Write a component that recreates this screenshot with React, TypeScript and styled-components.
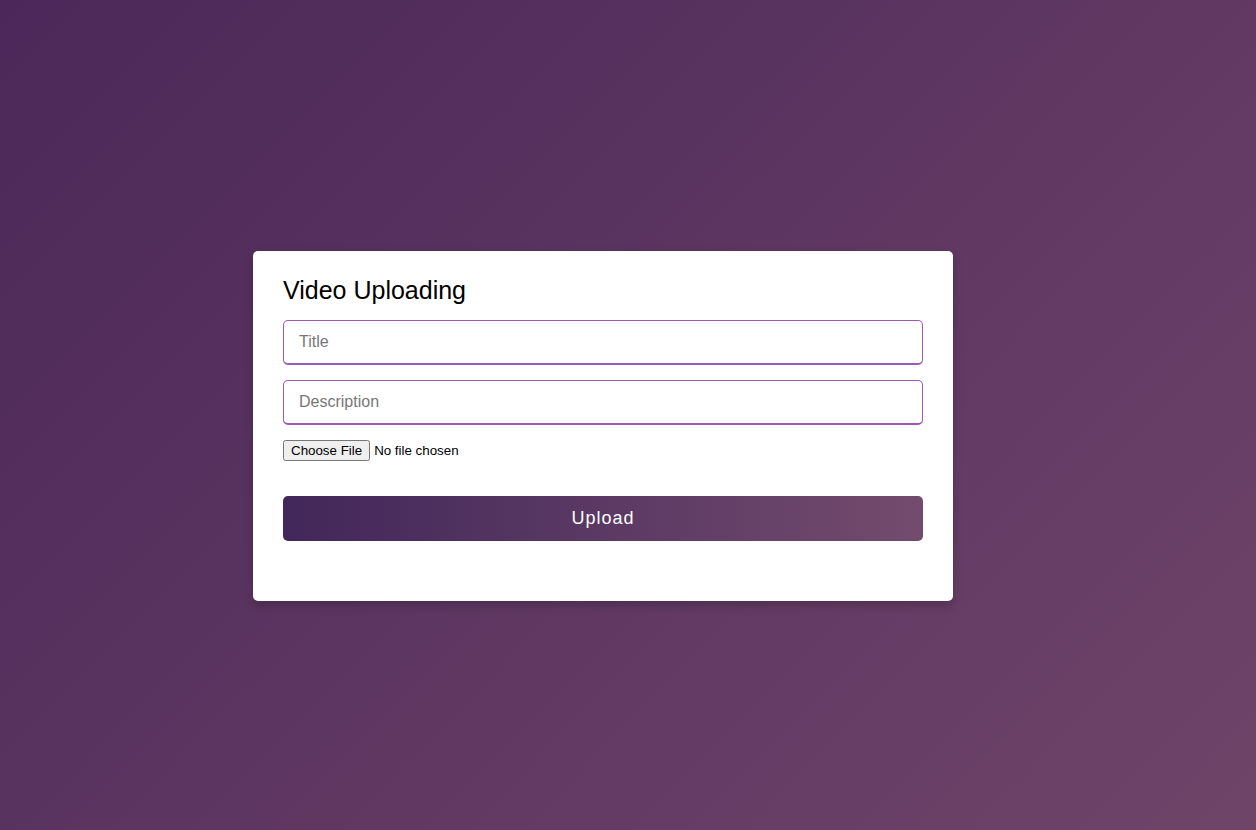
import React, {FC, useState} from 'react';
import styled, {createGlobalStyle} from 'styled-components';

const GlobalStyle = createGlobalStyle`
  html, body {
    margin: 0;
    padding: 0;
    height: 100%;
  }
  body {
    font-family: 'Liberation Sans', Arial, sans-serif;
    background: linear-gradient(135deg, #4b2859 0%, #6f4469 100%);
    min-height: 830px;
  }
`;

const Page = styled.div`
  min-height: 830px;
  box-sizing: border-box;
  padding: 251px 0 0 253px;
`;

const Card = styled.form`
  width: 700px;
  box-sizing: border-box;
  padding: 25px 30px 60px;
  background: #fff;
  border-radius: 5px;
  box-shadow: 0 4px 10px rgba(0, 0, 0, 0.2);
  display: flex;
  flex-direction: column;
`;

const Heading = styled.h2`
  margin: 0 0 16px;
  font-size: 25px;
  line-height: 28px;
  font-weight: normal;
  color: #000;
`;

const Field = styled.input`
  height: 45px;
  box-sizing: border-box;
  width: 100%;
  padding: 0 15px;
  margin-bottom: 15px;
  border: 1px solid #9b59b6;
  border-bottom-width: 2px;
  border-radius: 5px;
  font-family: inherit;
  font-size: 16px;
  color: #222;
  outline: none;
  &::placeholder {
    color: #777;
  }
`;

const FileInput = styled.input`
  font-family: 'Liberation Sans', Arial, sans-serif;
  font-size: 13.333px;
  margin: 0 0 35px;
  align-self: flex-start;
`;

const UploadButton = styled.button`
  height: 45px;
  border: none;
  border-radius: 5px;
  background: linear-gradient(to right, #42275a, #734b6d);
  color: #fff;
  font-family: inherit;
  font-size: 18px;
  letter-spacing: 1px;
  cursor: pointer;
`;

const App: FC = () => {
    const [title, setTitle] = useState<string>('')
    const [description, setDescription] = useState<string>('')

    return (
    <Page>
      <GlobalStyle/>
      <Card onSubmit={(e) => e.preventDefault()}>
        <Heading>Video Uploading</Heading>
        <Field placeholder="Title" value={title} onChange={(e) => setTitle(e.target.value)}/>
        <Field placeholder="Description" value={description} onChange={(e) => setDescription(e.target.value)}/>
        <FileInput type="file" accept="video/*"/>
        <UploadButton type="submit">Upload</UploadButton>
      </Card>
    </Page>
    );
};

export default App;
